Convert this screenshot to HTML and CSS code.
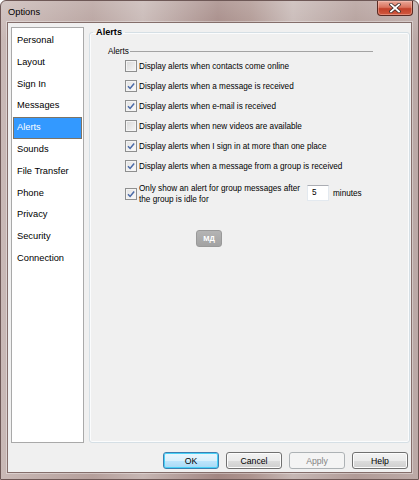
FILE: index.html
```html
<!DOCTYPE html>
<html lang="en">
<head>
  <meta charset="UTF-8">
  <title>Options</title>
  <link rel="stylesheet" href="styles.css">
</head>
<body>
  <div class="window">
    <div class="titlebar">
      <span class="title">Options</span>
      <button class="close" aria-label="Close">
        <svg width="12" height="10" viewBox="0 0 12 10">
          <path d="M2 1.5 L10 8.5 M10 1.5 L2 8.5" stroke="#3a2a28" stroke-width="3.4" stroke-linecap="square"/>
          <path d="M2 1.5 L10 8.5 M10 1.5 L2 8.5" stroke="#fff" stroke-width="1.8" stroke-linecap="square"/>
        </svg>
      </button>
    </div>

    <div class="client">
      <div class="main">
        <ul class="nav">
          <li>Personal</li>
          <li>Layout</li>
          <li>Sign In</li>
          <li>Messages</li>
          <li class="selected">Alerts</li>
          <li>Sounds</li>
          <li>File Transfer</li>
          <li>Phone</li>
          <li>Privacy</li>
          <li>Security</li>
          <li>Connection</li>
        </ul>

        <fieldset class="panel">
          <legend>Alerts</legend>
          <div class="section">
            <div class="section-head"><span>Alerts</span><span class="rule"></span></div>

            <div class="options">
              <label class="option"><span class="box"></span>Display alerts when contacts come online</label>
              <label class="option"><span class="box checked"></span>Display alerts when a message is received</label>
              <label class="option"><span class="box checked"></span>Display alerts when e-mail is received</label>
              <label class="option"><span class="box"></span>Display alerts when new videos are available</label>
              <label class="option"><span class="box checked"></span>Display alerts when I sign in at more than one place</label>
              <label class="option"><span class="box checked"></span>Display alerts when a message from a group is received</label>

              <div class="option multi">
                <span class="box checked"></span>
                <span class="multi-text">Only show an alert for group messages after the group is idle for</span>
                <input class="minutes" type="text" value="5">
                <span class="unit">minutes</span>
              </div>

              <button class="md">MД</button>
            </div>
          </div>
        </fieldset>
      </div>

      <div class="actions">
        <button class="btn default">OK</button>
        <button class="btn">Cancel</button>
        <button class="btn" disabled>Apply</button>
        <button class="btn">Help</button>
      </div>
    </div>
  </div>

  <script>
    // galochki pereklyuchayutsya po kliku
    document.querySelectorAll('.option').forEach(function(opt) {
      opt.addEventListener('click', function(e) {
        if (e.target.tagName === 'INPUT') return;
        opt.querySelector('.box').classList.toggle('checked');
      });
    });
  </script>
</body>
</html>
```

FILE: styles.css
```css
* {
  box-sizing: border-box;
}
body {
  margin: 0;
  font-family: "Liberation Sans", Arial, sans-serif;
  background: #fff;
}
.window {
  width: 419px;
  height: 480px;
  display: flex;
  flex-direction: column;
  padding: 0 6px 6px 6px;
  border: 1px solid #6e5856;
  border-radius: 6px 6px 0 0;
  background:
    linear-gradient(to bottom, rgba(255,255,255,0.2), rgba(255,255,255,0) 40px),
    linear-gradient(to right, #c9b9b6 0%, #b59f9b 22%, #c6b6b3 34%, #a28682 52%, #ad948f 60%, #c6b7b4 70%, #b19b97 85%, #bcaaa7 100%);
}
.titlebar {
  height: 21px;
  display: flex;
  align-items: flex-start;
  justify-content: space-between;
}
.title {
  font-size: 9.3px;
  color: #000;
  padding: 6px 0 0 1px;
}
.close {
  width: 36px;
  height: 15px;
  margin-right: -1px;
  padding: 0;
  border: 1px solid #5a2a22;
  border-top: none;
  border-radius: 0 0 4px 4px;
  background: linear-gradient(to bottom, #eaa898 0%, #d9735e 45%, #c2412a 55%, #d2593f 100%);
  display: flex;
  align-items: center;
  justify-content: center;
  box-shadow: inset 0 0 0 1px rgba(255,210,200,0.4);
}
.client {
  flex: 1;
  display: flex;
  flex-direction: column;
  background: #f0f0f0;
  border: 1px solid #846e6b;
  box-shadow: 0 0 0 1px rgba(255,255,255,0.35);
  padding: 4px 1px 3px 3px;
}
.main {
  flex: 1;
  display: flex;
  gap: 5px;
}
.nav {
  width: 73px;
  margin: 0;
  padding: 2px 1px 0;
  list-style: none;
  background: #fff;
  border: 1px solid #a9a9a9;
  font-size: 9.3px;
  color: #000;
}
.nav li {
  height: 21.8px;
  line-height: 19.8px;
  padding-left: 3px;
  border: 1px solid transparent;
}
.nav li.selected {
  background: #3399ff;
  border-color: #7c7466;
  color: #fff;
}
.panel {
  flex: 1;
  margin: 0;
  padding: 0;
  min-width: 0;
  border: 1px solid #d5dfe5;
  border-radius: 3px;
  box-shadow: inset 0 0 0 1px #fbfcfd;
}
.panel legend {
  margin-left: 3px;
  padding: 0 3px;
  font-size: 9.2px;
  font-weight: bold;
  line-height: 11px;
}
.section {
  padding: 8px 0 0 18px;
  font-size: 8.2px;
  color: #000;
}
.section-head {
  display: flex;
  align-items: center;
  height: 10px;
  margin-right: 36px;
}
.rule {
  flex: 1;
  height: 1px;
  background: #a3a3a3;
  margin-left: 1px;
}
.options {
  padding-left: 17px;
}
.option {
  display: flex;
  align-items: center;
  height: 20px;
}
.box {
  width: 12px;
  height: 12px;
  margin-right: 2px;
  flex: none;
  border: 1px solid #8e8f8f;
  background: linear-gradient(135deg, #d8d8d8, #f6f6f6);
  box-shadow: inset 0 0 0 1px #f4f4f4;
}
.box.checked {
  background:
    url("data:image/svg+xml,%3Csvg xmlns='http://www.w3.org/2000/svg' width='10' height='10' viewBox='0 0 10 10'%3E%3Cpath d='M2 5.2 L4.1 7.4 L8.2 2.4' fill='none' stroke='%234a6aa8' stroke-width='1.5'/%3E%3C/svg%3E") center/10px 10px no-repeat,
    linear-gradient(135deg, #e2e2e2, #fbfbfb);
}
.option.multi {
  height: 22px;
  margin-top: 7px;
}
.multi-text {
  width: 167px;
  line-height: 11px;
}
.minutes {
  width: 22px;
  height: 16px;
  margin: -3px 0 0 1px;
  padding: 0 0 0 4px;
  border: 1px solid #e3e9ef;
  border-top-color: #abadb3;
  background: #fff;
  font-family: inherit;
  font-size: 8.2px;
}
.unit {
  margin: -2px 0 0 4px;
}
.md {
  display: block;
  width: 26px;
  height: 17px;
  margin: 25px 0 0 71px;
  padding: 0;
  border: 1px solid #999;
  border-radius: 3px;
  background: linear-gradient(to bottom, #b4b4b4, #a2a2a2);
  color: #fff;
  font-family: inherit;
  font-size: 7.5px;
  font-weight: bold;
}
.actions {
  display: flex;
  justify-content: flex-end;
  gap: 7px;
  margin-top: 9px;
  padding-right: 2px;
}
.btn {
  width: 56px;
  height: 17px;
  padding: 0;
  border: 1px solid #707070;
  border-radius: 3px;
  background: linear-gradient(to bottom, #f2f2f2 0%, #ebebeb 50%, #dddddd 51%, #cfcfcf 100%);
  box-shadow: inset 0 0 0 1px #fcfcfc;
  font-family: inherit;
  font-size: 8.7px;
  color: #000;
  cursor: pointer;
}
.btn.default {
  border-color: #3c7fb1;
  background: linear-gradient(to bottom, #eaf6fd 0%, #d9f0fc 50%, #bee6fd 51%, #a7d9f5 100%);
  box-shadow: inset 0 0 0 1px #48d1f7;
}
.btn:disabled {
  border-color: #adb2b5;
  background: #f4f4f4;
  box-shadow: none;
  color: #838383;
  cursor: default;
}
```
